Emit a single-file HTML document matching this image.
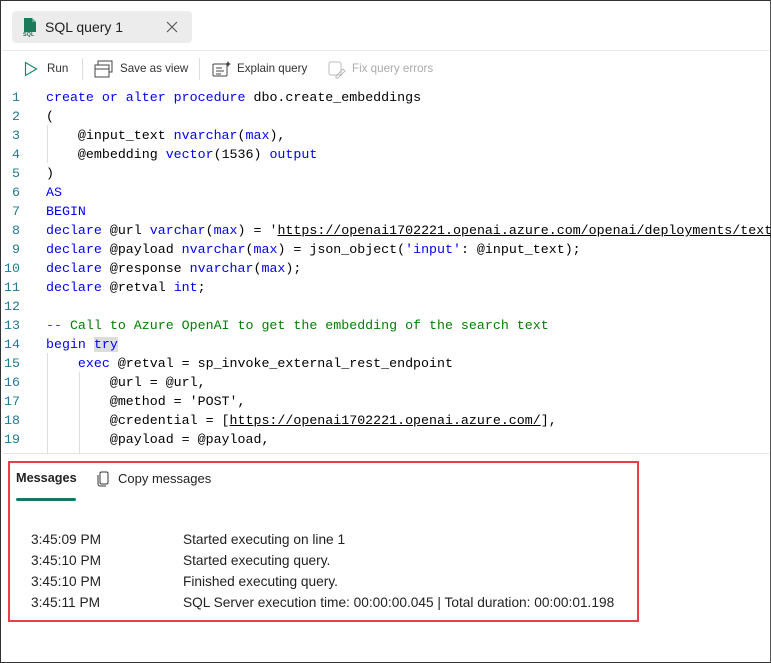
<!DOCTYPE html>
<html><head><style>
html,body{margin:0;padding:0}
body{width:771px;height:663px;position:relative;overflow:hidden;background:#fff;font-family:"Liberation Sans",sans-serif;color:#222}
.frame{position:absolute;left:0;top:0;width:769px;height:661px;border:1px solid #333;border-right:1px solid #555}
.tab{position:absolute;left:12px;top:11px;width:180px;height:32px;background:#ececec;border-radius:4px}
.tab .t{position:absolute;left:33px;top:8px;font-size:14px;color:#222}
.hr{position:absolute;left:3px;right:2px;top:50px;height:1px;background:#e6e6e6}
.tb{position:absolute;top:62px;font-size:11.6px;color:#333}
.sep{position:absolute;top:58px;width:1px;height:22px;background:#ddd}
.code{position:absolute;left:0;top:88px;font-family:"Liberation Mono",monospace;font-size:13.3px;line-height:19px;white-space:pre}
.ln{position:absolute;left:12px;width:20px;color:#237893}
.cl{position:absolute;left:46px;color:#000}
.k{color:#0000ff}.c{color:#008000}.s{color:#a31515}
.u{text-decoration:underline}
.guide{position:absolute;width:1px;background:#ddd}
.msg{position:absolute;left:8px;top:461px;width:627px;height:157px;border:2px solid #e8404a}
.row{position:absolute;font-size:13.7px;color:#222}
</style></head><body>
<div class="frame"></div>
<div class="tab">
<svg style="position:absolute;left:11px;top:6px" width="14" height="20" viewBox="0 0 14 20"><path d="M1 1h8l4 4v10H1z" fill="#1b7a5a"/><path d="M9 1v4h4" fill="#5aa88a"/><text x="0" y="19" font-size="5.5" fill="#1b7a5a" font-family="Liberation Sans" font-weight="bold">SQL</text></svg>
<span class="t">SQL query 1</span>
<svg style="position:absolute;left:154px;top:10px" width="12" height="12"><path d="M1 1L11 11M11 1L1 11" stroke="#555" stroke-width="1.1"/></svg>
</div>
<div class="hr"></div>
<svg style="position:absolute;left:24px;top:61px" width="14" height="16"><path d="M1.5 1.5L12.5 8L1.5 14.5Z" fill="none" stroke="#1b8a6a" stroke-width="1.2"/></svg>
<span class="tb" style="left:47px">Run</span>
<div class="sep" style="left:82px"></div>
<svg style="position:absolute;left:94px;top:60px" width="20" height="18"><rect x="4" y="1" width="14" height="11" fill="#fff" stroke="#444"/><rect x="1" y="5" width="14" height="12" fill="#fff" stroke="#444"/><path d="M1 9h14" stroke="#444"/></svg>
<span class="tb" style="left:120px">Save as view</span>
<div class="sep" style="left:199px"></div>
<svg style="position:absolute;left:212px;top:60px" width="20" height="18"><rect x="1" y="4" width="14" height="12" rx="1" fill="none" stroke="#444"/><path d="M4 8h6M4 11h8M4 14h5" stroke="#444"/><path d="M16 1l1 2 2 1-2 1-1 2-1-2-2-1 2-1z" fill="#444"/></svg>
<span class="tb" style="left:237px">Explain query</span>
<svg style="position:absolute;left:328px;top:61px" width="18" height="18"><rect x="1" y="1" width="12" height="13" rx="2" fill="none" stroke="#bbb"/><path d="M8 15l7-7 2 2-7 7h-2z" fill="none" stroke="#bbb"/></svg>
<span class="tb" style="left:352px;color:#aaa">Fix query errors</span>

<div class="guide" style="left:47px;top:125px;height:38px"></div>
<div class="guide" style="left:47px;top:353px;height:100px"></div>
<div class="guide" style="left:79px;top:372px;height:81px"></div>
<div class="code">
<span class="ln" style="top:0">1</span><span class="cl" style="top:0"><span class="k">create or alter procedure</span> dbo.create_embeddings</span>
<span class="ln" style="top:19px">2</span><span class="cl" style="top:19px">(</span>
<span class="ln" style="top:38px">3</span><span class="cl" style="top:38px">    @input_text <span class="k">nvarchar</span>(<span class="k">max</span>),</span>
<span class="ln" style="top:57px">4</span><span class="cl" style="top:57px">    @embedding <span class="k">vector</span>(1536) <span class="k">output</span></span>
<span class="ln" style="top:76px">5</span><span class="cl" style="top:76px">)</span>
<span class="ln" style="top:95px">6</span><span class="cl" style="top:95px"><span class="k">AS</span></span>
<span class="ln" style="top:114px">7</span><span class="cl" style="top:114px"><span class="k">BEGIN</span></span>
<span class="ln" style="top:133px">8</span><span class="cl" style="top:133px"><span class="k">declare</span> @url <span class="k">varchar</span>(<span class="k">max</span>) = '<span class="u">https://openai1702221.openai.azure.com/openai/deployments/text</span></span>
<span class="ln" style="top:152px">9</span><span class="cl" style="top:152px"><span class="k">declare</span> @payload <span class="k">nvarchar</span>(<span class="k">max</span>) = json_object(<span class="k">'input'</span>: @input_text);</span>
<span class="ln" style="top:171px;left:4px">10</span><span class="cl" style="top:171px"><span class="k">declare</span> @response <span class="k">nvarchar</span>(<span class="k">max</span>);</span>
<span class="ln" style="top:190px;left:4px">11</span><span class="cl" style="top:190px"><span class="k">declare</span> @retval <span class="k">int</span>;</span>
<span class="ln" style="top:209px;left:4px">12</span>
<span class="ln" style="top:228px;left:4px">13</span><span class="cl" style="top:228px"><span class="c">-- Call to Azure OpenAI to get the embedding of the search text</span></span>
<span class="ln" style="top:247px;left:4px">14</span><span class="cl" style="top:247px"><span class="k">begin <span style="background:#ddd">try</span></span></span>
<span class="ln" style="top:266px;left:4px">15</span><span class="cl" style="top:266px">    <span class="k">exec</span> @retval = sp_invoke_external_rest_endpoint</span>
<span class="ln" style="top:285px;left:4px">16</span><span class="cl" style="top:285px">        @url = @url,</span>
<span class="ln" style="top:304px;left:4px">17</span><span class="cl" style="top:304px">        @method = 'POST',</span>
<span class="ln" style="top:323px;left:4px">18</span><span class="cl" style="top:323px">        @credential = [<span class="u">https://openai1702221.openai.azure.com/</span>],</span>
<span class="ln" style="top:342px;left:4px">19</span><span class="cl" style="top:342px">        @payload = @payload,</span>
</div>
<div style="position:absolute;left:3px;right:2px;top:453px;height:1px;background:#e4e4e4"></div>
<div class="msg"></div>
<span class="row" style="left:16px;top:471px;font-weight:bold;font-size:12.7px">Messages</span>
<div style="position:absolute;left:16px;top:498px;width:60px;height:3px;background:#117865;border-radius:2px"></div>
<svg style="position:absolute;left:97px;top:471px" width="12" height="16"><rect x="3" y="1" width="8" height="12" rx="1.5" fill="none" stroke="#333"/><path d="M1 4v9a2 2 0 0 0 2 2h6" fill="none" stroke="#333"/></svg>
<span class="row" style="left:118px;top:471px;font-size:13px">Copy messages</span>
<span class="row" style="left:31px;top:532px">3:45:09 PM</span><span class="row" style="left:183px;top:532px">Started executing on line 1</span>
<span class="row" style="left:31px;top:553px">3:45:10 PM</span><span class="row" style="left:183px;top:553px">Started executing query.</span>
<span class="row" style="left:31px;top:574px">3:45:10 PM</span><span class="row" style="left:183px;top:574px">Finished executing query.</span>
<span class="row" style="left:31px;top:595px">3:45:11 PM</span><span class="row" style="left:183px;top:595px">SQL Server execution time: 00:00:00.045 | Total duration: 00:00:01.198</span>
</body></html>
